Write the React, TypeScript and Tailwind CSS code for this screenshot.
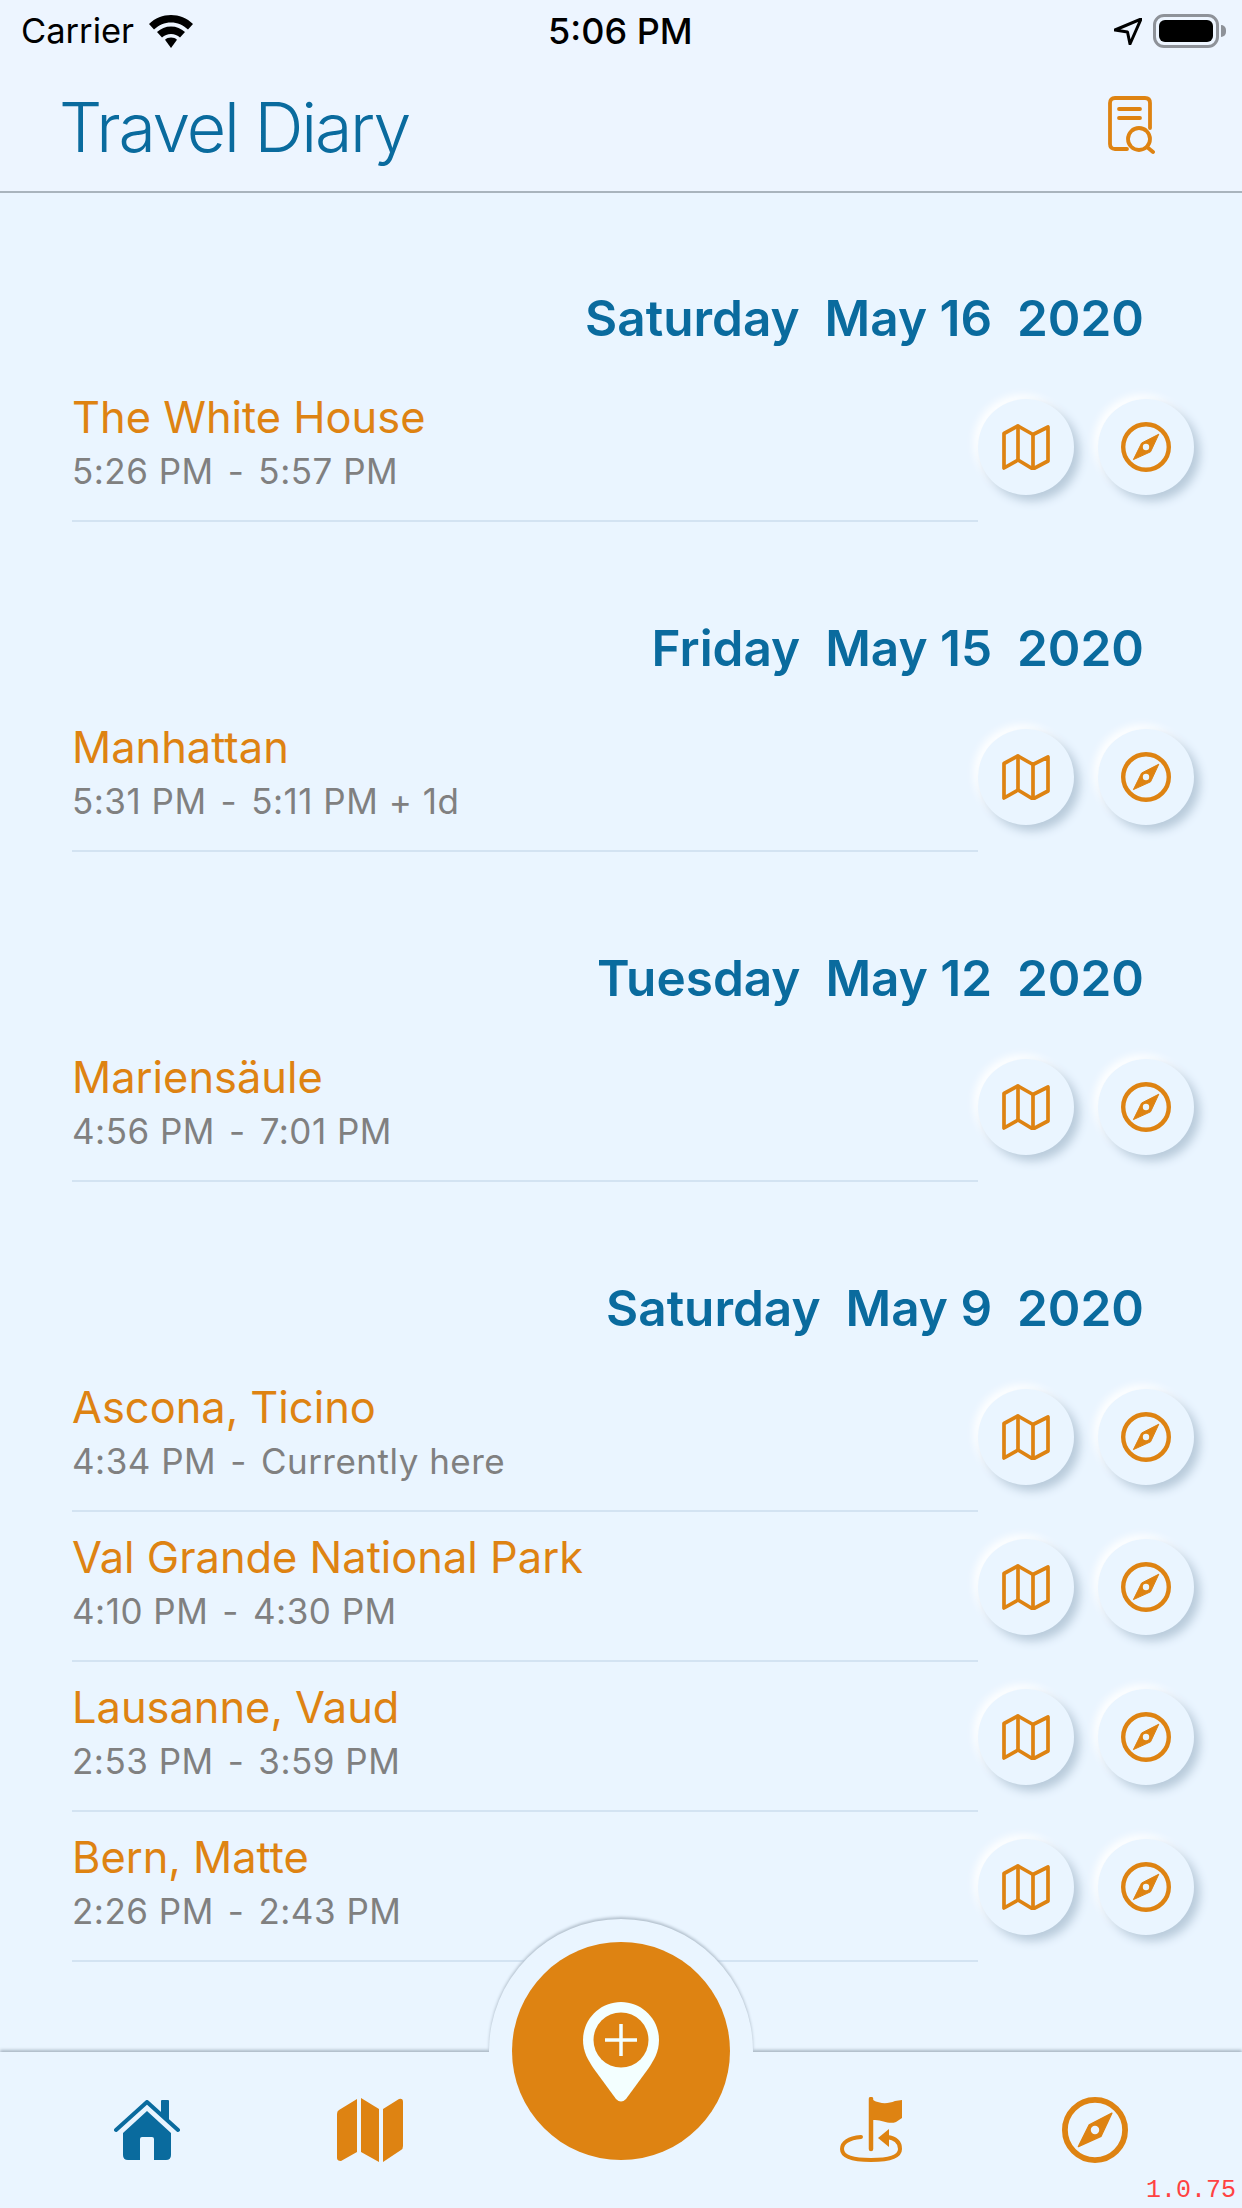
const sections = [
  {
    date: "Saturday  May 16  2020",
    places: [{ name: "The White House", time: "5:26 PM \u200a-\u200a 5:57 PM" }],
  },
  {
    date: "Friday  May 15  2020",
    places: [{ name: "Manhattan", time: "5:31 PM \u200a-\u200a 5:11 PM + 1d" }],
  },
  {
    date: "Tuesday  May 12  2020",
    places: [{ name: "Mariensäule", time: "4:56 PM \u200a-\u200a 7:01 PM" }],
  },
  {
    date: "Saturday  May 9  2020",
    places: [
      { name: "Ascona, Ticino", time: "4:34 PM \u200a-\u200a Currently here" },
      { name: "Val Grande National Park", time: "4:10 PM \u200a-\u200a 4:30 PM" },
      { name: "Lausanne, Vaud", time: "2:53 PM \u200a-\u200a 3:59 PM" },
      { name: "Bern, Matte", time: "2:26 PM \u200a-\u200a 2:43 PM" },
    ],
  },
];

function MapOutline() {
  return (
    <svg width="48" height="46" viewBox="-1 -1 48 46" fill="none" stroke="#de8312" strokeWidth="3.700" strokeLinejoin="round" strokeLinecap="round">
      <path d="M1 8.500 15 1 30 9.500 45 2V36L30 44 15 35 1 43Z" />
      <path d="M15 1V35M30 9.500V44" />
    </svg>
  );
}

function Compass({ size }: { size: number }) {
  return (
    <svg width={size} height={size} viewBox="-25 -25 50 50">
      <circle cx="0" cy="0" r="22.800" fill="none" stroke="#de8312" strokeWidth="4.400" />
      <path d="M12.800 -12.800 4.600 4.800 -12.600 12.600 -4.400 -4Z" fill="#de8312" stroke="#de8312" strokeWidth="1" strokeLinejoin="round" />
      <circle cx="0" cy="0" r="3.200" fill="#eaf5ff" />
    </svg>
  );
}

function Wifi() {
  return (
    <svg width="44" height="33" viewBox="0 0 44 33" fill="#000">
      <path d="M22 0C30 0 38 3 44 9L39 14.500C34 10 28.500 7.500 22 7.500S10 10 5 14.500L0 9C6 3 14 0 22 0Z" />
      <path d="M22 11.500C27.500 11.500 32 13.500 36 17L31 22.500C28.500 20.300 25.500 19 22 19S15.500 20.300 13 22.500L8 17C12 13.500 16.500 11.500 22 11.500Z" />
      <path d="M22 22.500C24.500 22.500 26.500 23.300 28 24.800L22 33 16 24.800C17.500 23.300 19.500 22.500 22 22.500Z" />
    </svg>
  );
}

function StatusBar() {
  return (
    <div className="flex h-[62px] items-center justify-between pl-[21px] pr-[16px] text-black">
      <div className="flex items-center gap-[15px]">
        <span className="font-['Inter',sans-serif] text-[34.500px] leading-none">Carrier</span>
        <Wifi />
      </div>
      <span className="absolute left-[548px] font-['Inter',sans-serif] text-[36px] font-medium leading-none">5:06 PM</span>
      <div className="flex items-center gap-[11px]">
        <svg width="28" height="27" viewBox="0 0 28 27">
          <path d="M27 1 16 26 13.500 14 1 12Z" fill="none" stroke="#000" strokeWidth="3" strokeLinejoin="round" />
        </svg>
        <div className="flex items-center gap-[2px]">
          <div className="h-[34px] w-[66px] rounded-[11px] border-[3px] border-[#8e9299] p-[3px]">
            <div className="h-full w-full rounded-[6px] bg-black" />
          </div>
          <div className="h-[12px] w-[5px] rounded-r-full bg-[#8e9299]" />
        </div>
      </div>
    </div>
  );
}

function Header() {
  return (
    <div className="bg-[#edf5ff] border-b-2 border-[#a9b4bd]">
      <StatusBar />
      <div className="flex h-[129px] items-center justify-between pl-[59px] pr-[87px]">
        <h1 className="font-['Inter',sans-serif] text-[68px] font-light leading-none tracking-[-2.200px] text-[#0a6b9e]">Travel Diary</h1>
        <svg width="48" height="58" viewBox="0 0 48 58" fill="none" stroke="#de8312" strokeWidth="3.800" strokeLinecap="round" className="-mt-[4px]">
          <path d="M20 53H8Q3 53 3 48V7Q3 2 8 2H38Q43 2 43 7V32" />
          <path d="M12 13H33M12 22H33" />
          <circle cx="32" cy="43" r="11" />
          <path d="M40 51 46 56" />
        </svg>
      </div>
    </div>
  );
}

function RoundButton({ children }: { children: React.ReactNode }) {
  return (
    <button className="flex h-[96px] w-[96px] items-center justify-center rounded-full bg-[#eaf5ff] shadow-[6px_6px_10px_#b9cbdb,-4px_-4px_8px_#ffffff]">
      {children}
    </button>
  );
}

function PlaceRow({ name, time }: { name: string; time: string }) {
  return (
    <div className="flex h-[150px] items-center pl-[72px] pr-[48px]">
      <div className="flex-1 self-stretch border-b-2 border-[#d3e3f2] pt-[18px]">
        <div className="font-['Inter',sans-serif] text-[43.400px] leading-[54px] text-[#de8312]">{name}</div>
        <div className="whitespace-pre font-['Inter',sans-serif] text-[35px] leading-[54px] tracking-[0.5px] text-[#808080]">{time}</div>
      </div>
      <div className="flex gap-[24px]">
        <RoundButton>
          <MapOutline />
        </RoundButton>
        <RoundButton>
          <Compass size={50} />
        </RoundButton>
      </div>
    </div>
  );
}

function TabBar() {
  return (
    <div className="relative h-[156px] shrink-0 bg-[#eaf5ff] shadow-[0_-2px_3px_#a9b7c4]">
      {/* notch behind the add button */}
      <div className="absolute left-[489px] top-[-133px] h-[133px] w-[264px] rounded-t-full bg-[#eaf5ff] shadow-[0_-2px_3px_#b3c0cd]" />
      <div className="absolute left-[489px] top-0 h-[4px] w-[264px] bg-[#eaf5ff]" />
      <div className="absolute left-[512px] top-[-110px] flex h-[218px] w-[218px] justify-center rounded-full bg-[#de8312] pt-[60px]">
        <svg width="76" height="100" viewBox="0 0 76 100">
          <path d="M38 0C59 0 76 17 76 38 76 50 71 58 65 67L43 97Q38 102 33 97L11 67C5 58 0 50 0 38 0 17 17 0 38 0Z" fill="#f3ffff" />
          <circle cx="38" cy="38" r="27.500" fill="#de8312" />
          <path d="M22 38H54M38 22V54" stroke="#f3ffff" strokeWidth="3.500" />
        </svg>
      </div>

      <div className="flex items-start pl-[114px] pt-[45px]">
        <svg width="66" height="62" viewBox="0 0 66 62" fill="#0a6b9e" className="mt-[3px]">
          <path d="M2 30 33 2 64 30" fill="none" stroke="#0a6b9e" strokeWidth="4" strokeLinecap="round" strokeLinejoin="round" />
          <path d="M47 1Q47 0 48 0H54Q55 0 55 1V24L47 15Z" />
          <path d="M33 11 57 33V55Q57 60 52 60H40V39Q40 37 38 37H28Q26 37 26 39V60H14Q9 60 9 55V33Z" />
        </svg>
        <svg width="66" height="64" viewBox="0 0 66 64" fill="#de8312" className="ml-[157px] mt-[1px]">
          <path d="M20 1V54L4 63Q0 63 0 60V16Q0 13 2 12Z" />
          <path d="M24 0 42 11V64L24 54Z" />
          <path d="M46 11 62 1Q66 0 66 4V48Q66 51 64 52L46 64Z" />
        </svg>
        <svg width="63" height="66" viewBox="0 0 63 66" className="ml-[437px]">
          <path d="M31 2V52" stroke="#de8312" strokeWidth="4.500" strokeLinecap="round" />
          <path d="M33 3C40 7 48 7 55 4L62 3V21L56 25C48 28 42 22 33 23Z" fill="#de8312" />
          <path d="M38 41 49 32V50Z" fill="#de8312" />
          <path d="M21 40C8 41 2 46 2 52 2 60 14 63 31 63 48 63 60 60 60 52 60 45 55 41 47 40" fill="none" stroke="#de8312" strokeWidth="4" strokeLinecap="round" />
        </svg>
        <div className="ml-[159px]">
          <Compass size={66} />
        </div>
      </div>

      <span className="absolute bottom-[2px] right-[6px] font-['Liberation_Mono',monospace] text-[25px] leading-[30px] text-[#ff4242]">1.0.75</span>
    </div>
  );
}

export default function App() {
  return (
    <div className="relative flex h-[2208px] w-[1242px] flex-col overflow-hidden bg-[#eaf5ff]">
      <Header />
      <div className="-mt-px flex-1">
        {sections.map((section) => (
          <div key={section.date}>
            <h2 className="whitespace-pre pr-[98px] pt-[96px] pb-[24px] text-right font-['Inter',sans-serif] text-[49.500px] font-semibold leading-[60px] text-[#0a6b9e]">
              {section.date}
            </h2>
            {section.places.map((place) => (
              <PlaceRow key={place.name} name={place.name} time={place.time} />
            ))}
          </div>
        ))}
      </div>
      <TabBar />
    </div>
  );
}
